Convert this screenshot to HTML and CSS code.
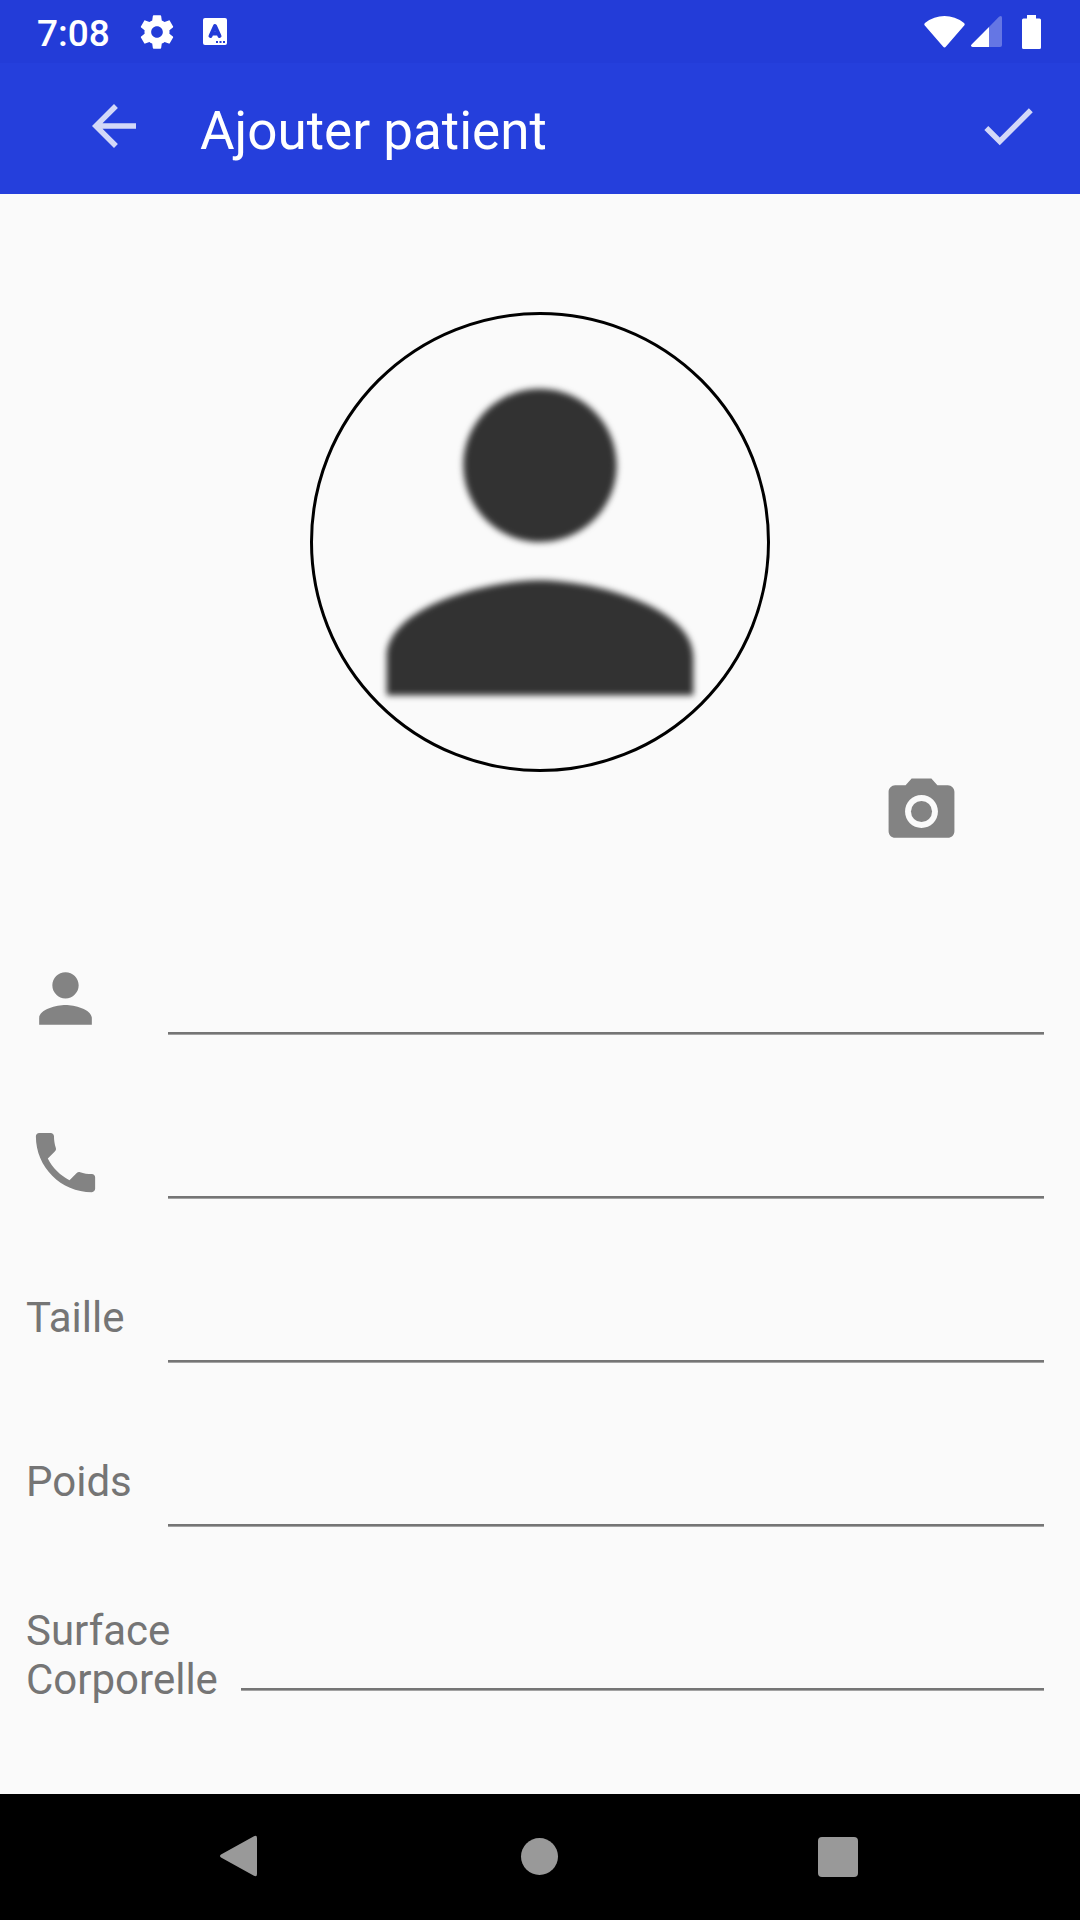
FILE: index.html
```
<!DOCTYPE html>
<html lang="fr">
<head>
<meta charset="utf-8">
<meta name="viewport" content="width=device-width, initial-scale=1">
<title>Ajouter patient</title>
<link rel="stylesheet" href="styles.css">
</head>
<body>
<div class="status-bar">
  <span class="clock">7:08</span>
  <svg class="status-gear" viewBox="0 0 24 24" aria-hidden="true"><path d="M19.43 12.98c.04-.32.07-.64.07-.98s-.03-.66-.07-.98l2.11-1.65c.19-.15.24-.42.12-.64l-2-3.46c-.12-.22-.39-.3-.61-.22l-2.49 1c-.52-.4-1.08-.73-1.69-.98l-.38-2.65C14.46 2.18 14.25 2 14 2h-4c-.25 0-.46.18-.49.42l-.38 2.65c-.61.25-1.17.59-1.69.98l-2.49-1c-.23-.09-.49 0-.61.22l-2 3.46c-.13.22-.07.49.12.64l2.11 1.65c-.04.32-.07.65-.07.98s.03.66.07.98l-2.11 1.65c-.19.15-.24.42-.12.64l2 3.46c.12.22.39.3.61.22l2.49-1c.52.4 1.08.73 1.69.98l.38 2.65c.03.24.24.42.49.42h4c.25 0 .46-.18.49-.42l.38-2.65c.61-.25 1.17-.59 1.69-.98l2.49 1c.23.09.49 0 .61-.22l2-3.46c.12-.22.07-.49-.12-.64l-2.11-1.65zM12 15.500c-1.930 0-3.500-1.570-3.500-3.500s1.570-3.500 3.500-3.500 3.500 1.570 3.500 3.500-1.570 3.500-3.500 3.500z"/></svg>
  <svg class="status-input" viewBox="0 0 24 27" aria-hidden="true"><rect width="24" height="27" rx="2"/><path class="glyph" d="M7.500 18L12 8l4.500 10M9 15.500h6"/><path class="dots" d="M13 23h2v2h-2zm3.500 0h2v2h-2zm3.500 0h2v2h-2z"/></svg>
  <span class="status-right">
    <svg class="wifi" viewBox="0 0 41 32" aria-hidden="true"><path d="M.8 9.500Q-.4 7.800 1.300 6.700Q10 0 20.500 0T39.700 6.700Q41.400 7.800 40.200 9.500L22 30.500Q20.500 32.300 19 30.500z"/></svg>
    <svg class="signal" viewBox="0 0 31 31" aria-hidden="true"><path class="faded" d="M18 11L28 .8Q31-1.200 31 2V29Q31 31 29 31H18z"/><path d="M18 11V31H1.500Q-1 30.500.6 28.500z"/></svg>
    <svg class="battery" viewBox="0 0 19 34" aria-hidden="true"><path d="M5 0h9v3.500h3.500Q19 3.500 19 5v27.500Q19 34 17.500 34h-16Q0 34 0 32.500V5Q0 3.500 1.500 3.500H5z"/></svg>
  </span>
</div>
<header class="app-bar">
  <button class="icon-button" type="button" aria-label="Retour"><svg viewBox="0 0 24 24"><path d="M20 11H7.830l5.590-5.590L12 4l-8 8 8 8 1.410-1.410L7.830 13H20v-2z"/></svg></button>
  <h1 class="title">Ajouter patient</h1>
  <button class="icon-button" type="submit" form="patient" aria-label="Enregistrer"><svg viewBox="0 0 24 24"><path d="M9 16.170L4.830 12l-1.420 1.410L9 19 21 7l-1.410-1.410z"/></svg></button>
</header>
<main class="content">
  <div class="avatar">
    <svg viewBox="0 0 24 24" aria-hidden="true"><path d="M12 12c2.210 0 4-1.790 4-4s-1.790-4-4-4-4 1.790-4 4 1.790 4 4 4zm0 2c-2.670 0-8 1.340-8 4v2h16v-2c0-2.660-5.330-4-8-4z"/></svg>
  </div>
  <button class="camera" type="button" aria-label="Prendre une photo"><svg viewBox="0 0 24 24"><circle cx="12" cy="12" r="3.200"/><path d="M9 2L7.170 4H4c-1.100 0-2 .9-2 2v12c0 1.100.9 2 2 2h16c1.100 0 2-.9 2-2V6c0-1.100-.9-2-2-2h-3.170L15 2H9zm3 15c-2.760 0-5-2.240-5-5s2.240-5 5-5 5 2.240 5 5-2.240 5-5 5z"/></svg></button>
  <form class="form" id="patient">
    <div class="row">
      <label class="label label-icon" for="nom" aria-label="Nom"><svg viewBox="0 0 24 24"><path d="M12 12c2.210 0 4-1.790 4-4s-1.790-4-4-4-4 1.790-4 4 1.790 4 4 4zm0 2c-2.670 0-8 1.340-8 4v2h16v-2c0-2.660-5.330-4-8-4z"/></svg></label>
      <input class="field" id="nom" type="text">
    </div>
    <div class="row">
      <label class="label label-icon" for="tel" aria-label="Téléphone"><svg viewBox="0 0 24 24"><path d="M6.620 10.790c1.440 2.830 3.760 5.140 6.590 6.590l2.200-2.200c.27-.27.67-.36 1.020-.24 1.120.37 2.330.57 3.570.57.55 0 1 .45 1 1V20c0 .55-.45 1-1 1-9.390 0-17-7.610-17-17 0-.55.45-1 1-1h3.500c.55 0 1 .45 1 1 0 1.250.2 2.450.57 3.570.11.35.03.74-.25 1.020l-2.200 2.200z"/></svg></label>
      <input class="field" id="tel" type="tel">
    </div>
    <div class="row">
      <label class="label" for="taille">Taille</label>
      <input class="field" id="taille" type="text" inputmode="decimal">
    </div>
    <div class="row">
      <label class="label" for="poids">Poids</label>
      <input class="field" id="poids" type="text" inputmode="decimal">
    </div>
    <div class="row">
      <label class="label label-long" for="surface">Surface<br>Corporelle</label>
      <input class="field" id="surface" type="text" inputmode="decimal">
    </div>
  </form>
</main>
<nav class="nav-bar" aria-label="Système">
  <button class="nav-button" type="button" aria-label="Précédent"><svg viewBox="0 0 60 60"><path d="M43.500 9.500Q47 7.500 47 11V47Q47 50.500 43.500 48.500L11 30.500Q9 29 11 27.500z"/></svg></button>
  <button class="nav-button" type="button" aria-label="Accueil"><svg viewBox="0 0 60 60"><circle cx="29.500" cy="29.500" r="18.500"/></svg></button>
  <button class="nav-button" type="button" aria-label="Applications récentes"><svg viewBox="0 0 60 60"><rect x="8" y="10" width="40" height="40" rx="4"/></svg></button>
</nav>
</body>
</html>
```
FILE: styles.css
```
* {
  box-sizing: border-box;
}

body {
  margin: 0;
  min-height: 100vh;
  display: flex;
  flex-direction: column;
  background: #fafafa;
  color: #757575;
  font-family: Roboto, "Noto Sans", sans-serif;
}

svg {
  display: block;
  fill: currentColor;
}

button {
  margin: 0;
  padding: 0;
  border: 0;
  background: none;
}

/* Status bar */
.status-bar {
  height: 63px;
  display: flex;
  align-items: center;
  padding: 0 39px 0 37px;
  background: #233cd8;
  color: #fff;
}

.clock {
  font-size: 37px;
  font-weight: 500;
  line-height: 43px;
  padding-top: 3px;
}

.status-gear {
  width: 40px;
  height: 40px;
  margin-left: 27px;
}

.status-input {
  width: 24px;
  height: 27px;
  margin-left: 26px;
}

.glyph {
  fill: none;
  stroke: #233cd8;
  stroke-width: 4;
  stroke-linecap: round;
  stroke-linejoin: round;
}

.dots {
  fill: #233cd8;
}

.status-right {
  display: flex;
  align-items: center;
  margin-left: auto;
}

.wifi {
  width: 41px;
  height: 32px;
}

.signal {
  width: 31px;
  height: 31px;
  margin-left: 6px;
}

.faded {
  opacity: 0.3;
}

.battery {
  width: 19px;
  height: 34px;
  margin-left: 20px;
}

/* App bar */
.app-bar {
  min-height: 131px;
  display: flex;
  align-items: flex-start;
  gap: 53px;
  padding: 30px 39px 0 81px;
  background: #253fdc;
  color: #fff;
}

.icon-button {
  flex: none;
  color: #fff;
  opacity: 0.8;
}

.icon-button svg {
  width: 66px;
  height: 66px;
}

.title {
  flex: 1;
  margin: 0;
  font-size: 53px;
  font-weight: 400;
  line-height: 76px;
}

/* Patient photo */
.content {
  flex: 1;
  display: flex;
  flex-direction: column;
  padding: 118px 0 90px;
}

.avatar {
  width: 460px;
  align-self: center;
  border: 3px solid #000;
  border-radius: 50%;
  color: #323232;
}

.avatar svg {
  margin: -3px;
  filter: blur(3px);
}

.camera {
  align-self: flex-end;
  margin-right: 119px;
  color: #838383;
}

.camera svg,
.label-icon svg {
  width: 79px;
  height: 79px;
}

/* Form */
.form {
  margin-top: 33px;
  padding: 0 36px 0 26px;
}

.row {
  height: 164px;
  display: flex;
  align-items: flex-end;
}

.label {
  min-width: 142px;
  padding-bottom: 34px;
  font-size: 42px;
  line-height: 49px;
}

.label-icon {
  padding-bottom: 10px;
  color: #838383;
}

.label-long {
  padding: 0 23px 0 0;
}

.field {
  flex: 1;
  min-width: 0;
  height: 80px;
  margin: 0 0 14px;
  padding: 0;
  border: 0;
  border-bottom: 2px solid #757575;
  box-shadow: 0 1px #a3a3a3;
  background: none;
  color: #212121;
  font: inherit;
  font-size: 47px;
  outline: 0;
}

/* System navigation */
.nav-bar {
  height: 126px;
  display: grid;
  grid-template-columns: repeat(3, 1fr);
  align-items: center;
  justify-items: center;
  padding: 0 90px;
  background: #000;
}

.nav-button {
  color: #999;
}

.nav-button svg {
  width: 60px;
  height: 60px;
}
```
